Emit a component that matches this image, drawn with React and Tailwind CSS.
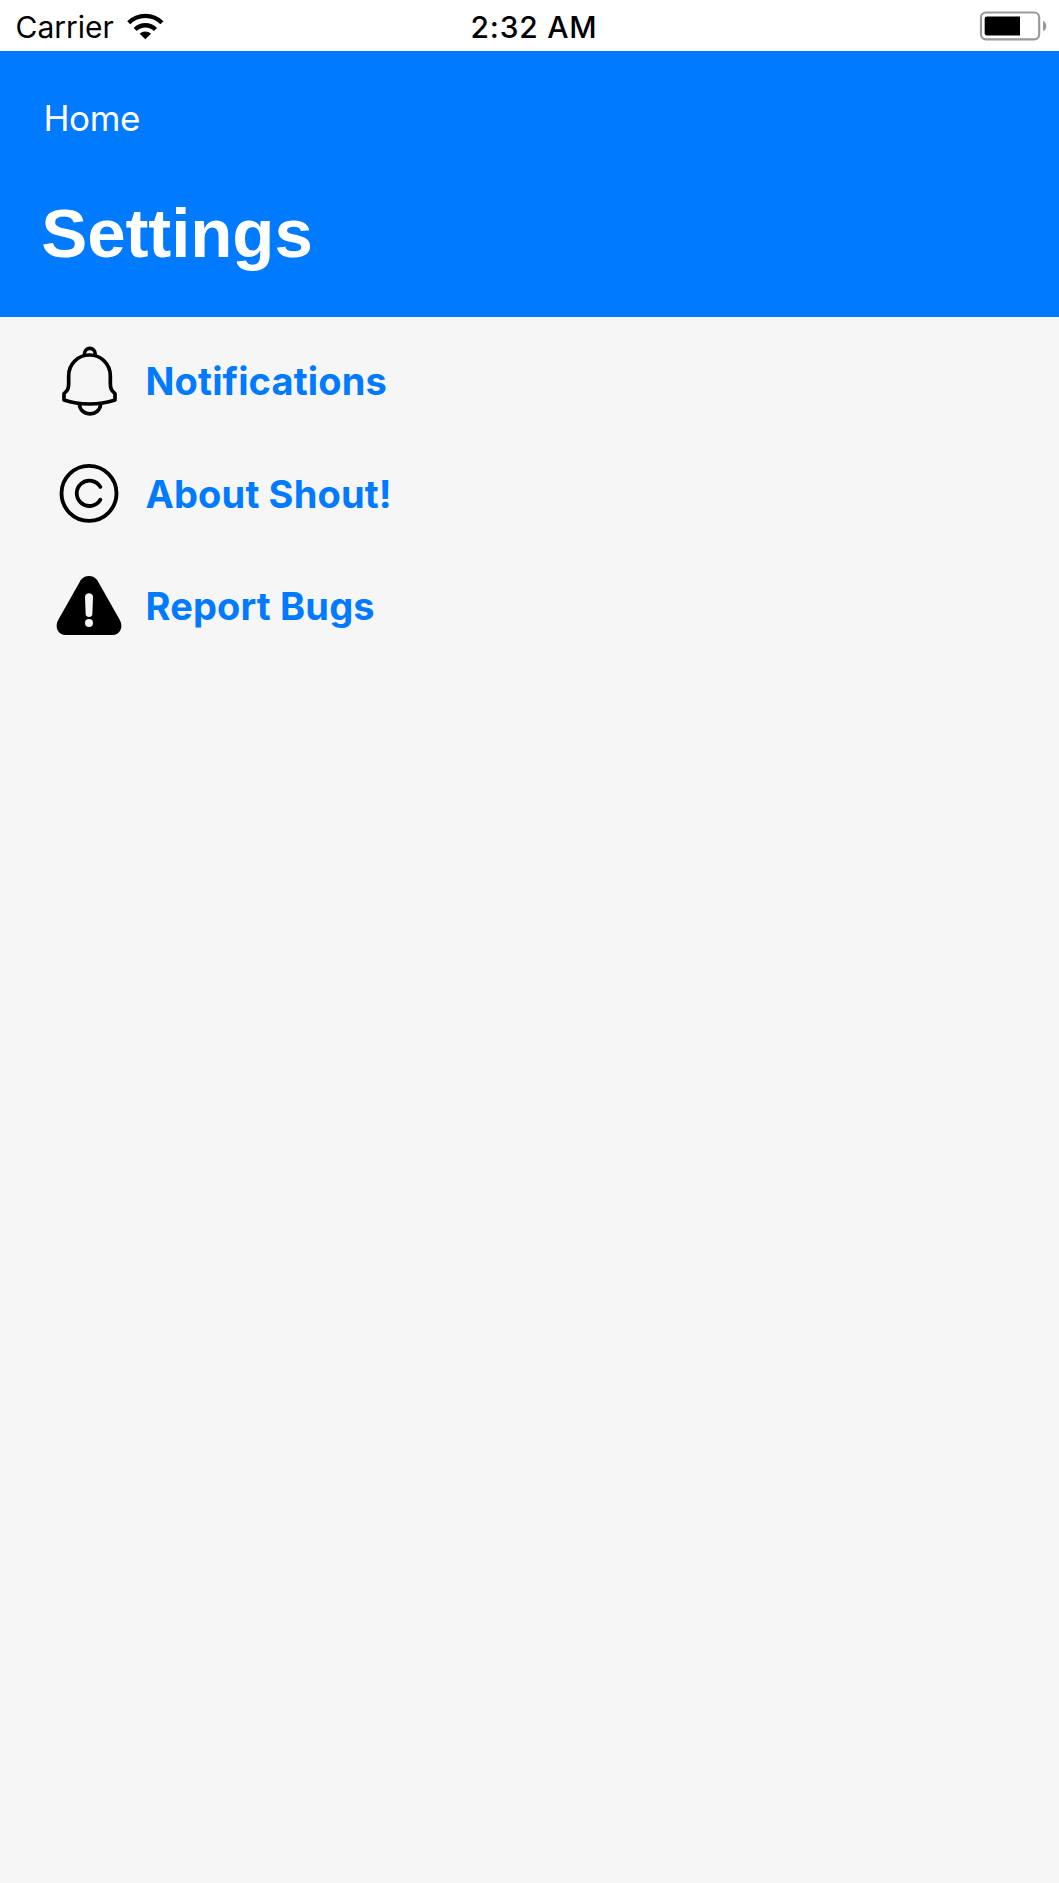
function WifiIcon() {
  return (
    <svg className="h-[30px] w-[40px]" viewBox="380 30 120 90" fill="none" stroke="#000" strokeWidth="13">
      <path d="M388.2 65.5a70 70 0 0 1 99.6 0" />
      <path d="M407.5 85.500a43 43 0 0 1 61 0" />
      <path d="M438 115l-17-16.500a24 24 0 0 1 34 0z" fill="#000" stroke="none" />
    </svg>
  );
}

function BatteryIcon() {
  return (
    <svg className="h-[30px] w-[68px]" viewBox="60 30 204 90">
      <rect x="66" y="34.500" width="174.500" height="80.500" rx="15" fill="none" stroke="#999" strokeWidth="6.500" />
      <path d="M183 46.500v57H84q-7 0-7-7V53.500q0-7 7-7z" fill="#000" />
      <path d="M252 59q10 5 10 16t-10 16z" fill="#999" />
    </svg>
  );
}

function BellIcon() {
  return (
    <svg className="size-20" viewBox="30 33 240 240" fill="none" stroke="#000" strokeWidth="11" strokeLinejoin="round">
      <path d="M148.500 75A62 62 0 0 0 86 137V160C86 174 84 181 72 191V210Q107 222 148 222T225 210V191C213 181 211 174 211 160V137A62 62 0 0 0 148.500 75Z" />
      <path d="M133 74C133 49 166 49 166 74" />
      <path d="M118 223C122 261 178 261 182 223" />
    </svg>
  );
}

function CopyrightIcon() {
  return (
    <svg className="size-20" viewBox="30 26.4 240 240" fill="none" stroke="#000" strokeWidth="11.500" strokeLinecap="round">
      <circle cx="147" cy="144.500" r="82.500" />
      <path d="M181 125A38 38 0 1 0 181 163.500" />
    </svg>
  );
}

function WarningIcon() {
  return (
    <svg className="size-20" viewBox="30 18 240 240">
      <path d="M122 61Q131 48 147 48T172 61L239 179C252 202 239 225 217 225H77C55 225 42 202 55 179Z" fill="#000" />
      <path d="M135 111C135 96 159 96 159 111L157 163C157 174 137 174 137 163Z" fill="#f6f6f6" />
      <circle cx="147" cy="189" r="12" fill="#f6f6f6" />
    </svg>
  );
}

const items = [
  { label: "Notifications", Icon: BellIcon },
  { label: "About Shout!", Icon: CopyrightIcon },
  { label: "Report Bugs", Icon: WarningIcon },
];

export default function App() {
  return (
    <div className="min-h-[1883px] w-full bg-[#f6f6f6] font-['Inter',sans-serif]">
      <div className="grid h-[51px] grid-cols-[1fr_auto_1fr] items-center bg-white text-[30px] leading-[51px] text-black">
        <div className="flex items-center pl-[15.5px]">
          <span className="pt-[3px] leading-[48px]">Carrier</span>
          <span className="ml-3"><WifiIcon /></span>
        </div>
        <span className="ml-[9px] pt-[3px] leading-[48px] font-medium tracking-[0.75px]">2:32 AM</span>
        <div className="flex justify-end pr-[12px]"><BatteryIcon /></div>
      </div>
      <header className="h-[266px] bg-[#007aff] pt-[47px] text-white">
        <p className="pl-[43.5px] text-[35px] leading-10 font-normal tracking-[-0.4px]">Home</p>
        <h1 className="mt-14 pl-[41.3px] font-['Liberation_Sans',sans-serif] text-[69px] leading-[80px] font-bold tracking-[-0.1px]">Settings</h1>
      </header>
      <ul className="pt-2">
        {items.map(({ label, Icon }) => (
          <li key={label} className="flex h-[112.5px] items-center gap-[15.5px] pl-[50px]">
            <Icon />
            <span className="text-[38px] leading-[48px] font-bold tracking-[0.15px] text-[#007aff]">{label}</span>
          </li>
        ))}
      </ul>
    </div>
  );
}
